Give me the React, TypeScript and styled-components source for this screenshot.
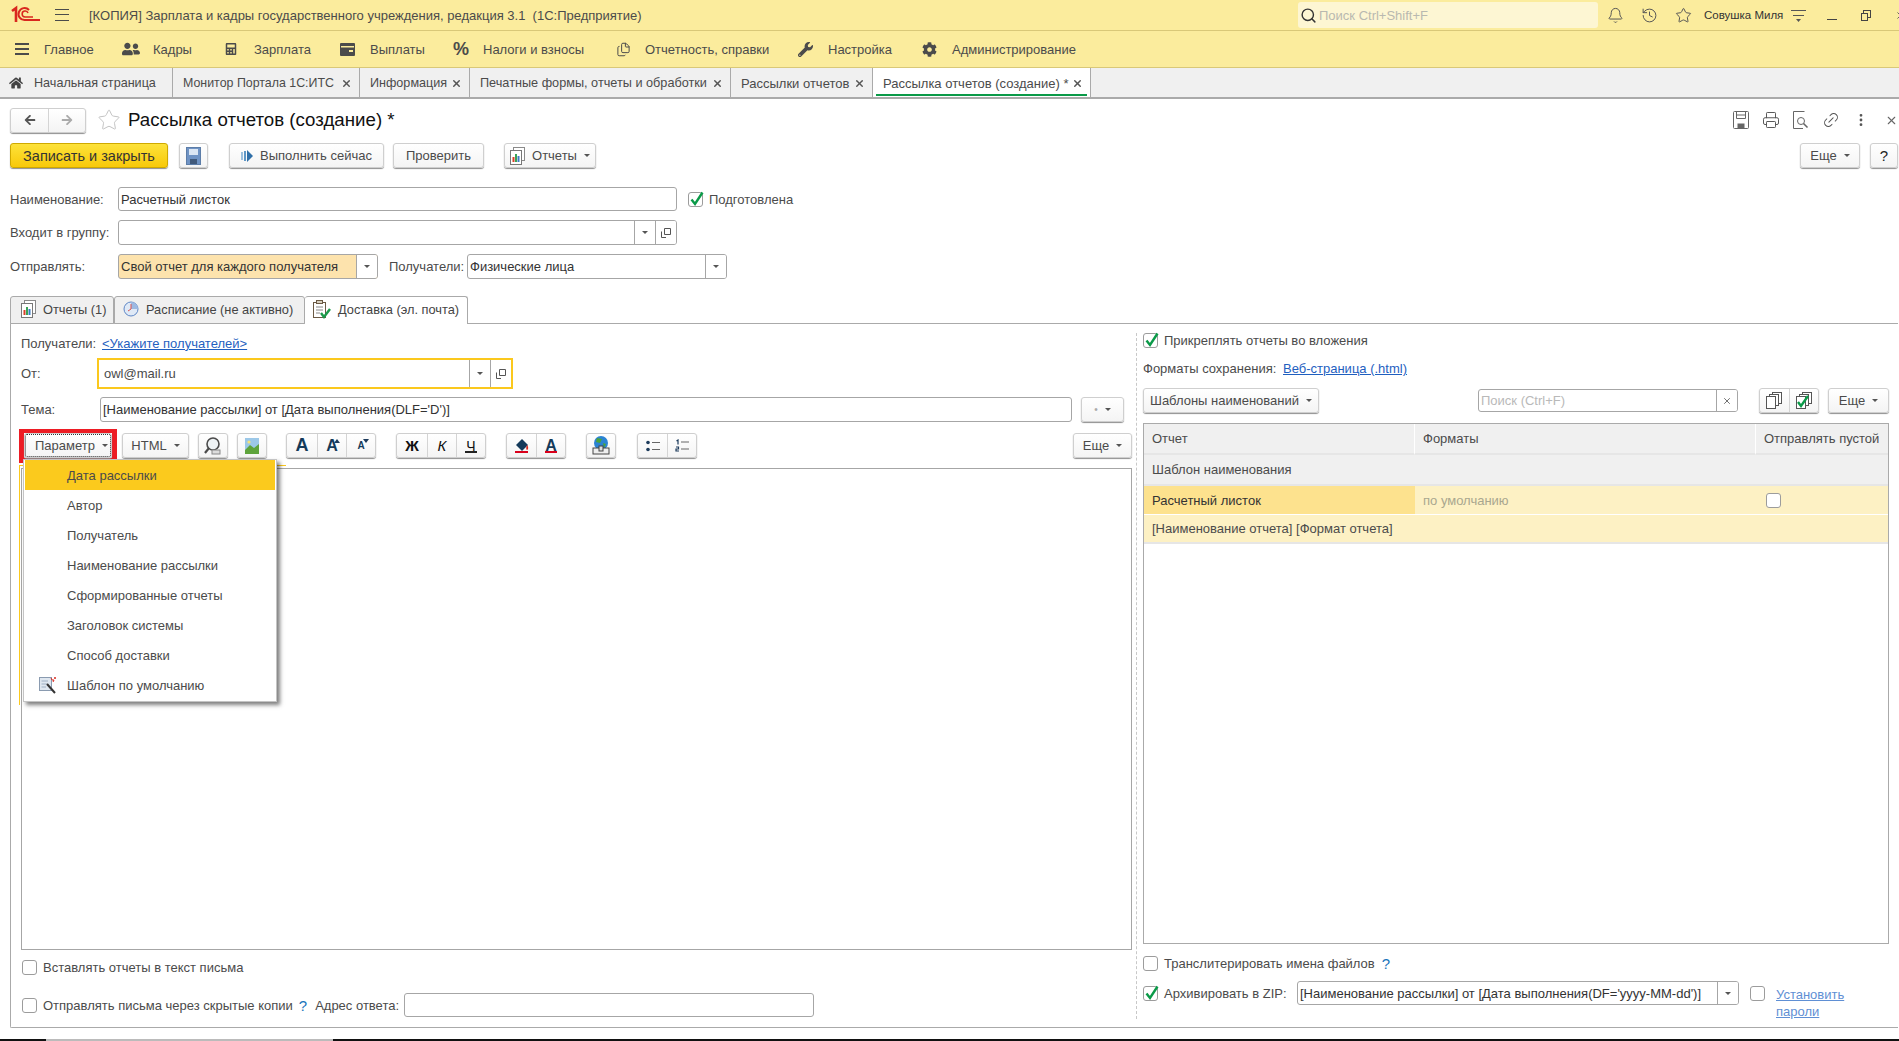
import * as React from 'react';
import styled, { createGlobalStyle } from 'styled-components';
import { Bell, History, Star, Search, X, Files, Link2, MoreVertical, Printer } from 'lucide-react';
import { FaHome, FaUserFriends, FaCalculator, FaWrench, FaCog, FaArrowLeft, FaArrowRight } from 'react-icons/fa';

const GlobalStyle = createGlobalStyle`
  html, body { margin: 0; padding: 0; background: #fff; }
  body { font-family: "Liberation Sans", Arial, sans-serif; font-size: 13px; color: #4b4b4b; }
  * { box-sizing: border-box; }
`;

const Page = styled.div`
  width: 1899px;
  height: 1041px;
  display: flex;
  flex-direction: column;
  overflow: hidden;
  background: #fff;
`;

/* top application chrome */
const TitleBar = styled.div`
  height: 31px;
  flex: none;
  display: flex;
  align-items: center;
  background: #fbec9d;
  border-bottom: 1px solid #d9c878;
  padding-left: 11px;
`;

const Hamburger = styled.div`
  width: 14px;
  height: 12px;
  margin-left: 14px;
  border-top: 1px solid #4b4b4b;
  border-bottom: 1px solid #4b4b4b;
  position: relative;
  &::after {
    content: '';
    position: absolute;
    left: 0;
    right: 0;
    top: 4px;
    height: 1px;
    background: #4b4b4b;
  }
`;

const AppTitle = styled.div`
  margin-left: 20px;
  white-space: pre;
  font-size: 13px;
`;

const GlobalSearch = styled.div`
  margin-left: auto;
  width: 300px;
  height: 26px;
  background: #fdf6d3;
  border-radius: 3px;
  display: flex;
  align-items: center;
  padding-left: 2px;
  color: #b9b9b0;
  gap: 2px;
  svg { color: #333; }
`;

const IconSlot = styled.div<{ $w?: number; $ml?: number }>`
  width: ${(p) => p.$w ?? 34}px;
  height: 24px;
  margin-left: ${(p) => p.$ml ?? 0}px;
  flex: none;
  display: flex;
  align-items: center;
  justify-content: center;
  color: #555;
`;

const EdgeClose = styled.div`
  width: 16px;
  flex: none;
  padding-left: 12px;
  color: #555;
  display: flex;
  svg { flex: none; }
`;

const UserName = styled.div`
  width: 74px;
  margin: 0 3px 0 4px;
  font-size: 11.5px;
  color: #333;
  white-space: nowrap;
`;

const MenuBar = styled.div`
  height: 37px;
  flex: none;
  display: flex;
  align-items: center;
  background: #fbec9d;
  border-bottom: 1px solid #d9c878;
  padding-left: 15px;
`;

const MenuItem = styled.div<{ $w: number; $gap: number }>`
  width: ${(p) => p.$w}px;
  flex: none;
  display: flex;
  align-items: center;
  gap: ${(p) => p.$gap}px;
  white-space: nowrap;
  svg { flex: none; color: #4b4b4b; }
`;

const Percent = styled.span`
  font-size: 18px;
  font-weight: bold;
  color: #4b4b4b;
  width: 15px;
`;

const TabStrip = styled.div`
  height: 31px;
  flex: none;
  display: flex;
  background: #f0f0f0;
  border-bottom: 2px solid #aaa;
`;

const TopTab = styled.div<{ $w: number; $active?: boolean; $pad?: number; $size?: number }>`
  width: ${(p) => p.$w}px;
  flex: none;
  display: flex;
  align-items: center;
  padding: 1px 7px 0 ${(p) => p.$pad ?? 10}px;
  border-right: 1px solid #aaa;
  white-space: nowrap;
  position: relative;
  font-size: ${(p) => p.$size ?? 13}px;
  background: ${(p) => (p.$active ? '#fff' : 'transparent')};
  border-left: ${(p) => (p.$active ? '1px solid #aaa' : 'none')};
  margin-left: ${(p) => (p.$active ? '-1px' : '0')};
  ${(p) =>
    p.$active &&
    `&::after {
      content: '';
      position: absolute;
      left: 3px;
      right: 3px;
      bottom: 1px;
      height: 2px;
      background: #0a9a48;
    }`}
`;

const TabLabel = styled.span<{ $ml?: number }>`
  flex: 1;
  margin-left: ${(p) => p.$ml ?? 0}px;
  overflow: hidden;
`;

const TabClose = styled.span`
  color: #555;
  display: flex;
  svg { display: block; }
`;

/* form area */
const Form = styled.div`
  flex: 1;
  min-height: 0;
  display: flex;
  flex-direction: column;
  padding: 9px 1px 0 10px;
`;

const FormHeader = styled.div`
  height: 24px;
  display: flex;
  align-items: center;
  flex: none;
`;

const FormTitle = styled.div`
  font-size: 18.7px;
  color: #111;
  margin-left: 7px;
  white-space: nowrap;
`;

const HeaderTools = styled.div`
  margin-left: auto;
  display: flex;
  align-items: center;
`;

const CloseSlot = styled.div`
  width: 22px;
  display: flex;
  justify-content: flex-end;
  color: #666;
`;

const CommandBar = styled.div`
  margin-top: 11px;
  height: 26px;
  display: flex;
  flex: none;
`;

const Button = styled.div<{ $w: number; $ml?: number; $h?: number }>`
  width: ${(p) => p.$w}px;
  height: ${(p) => p.$h ?? 25}px;
  margin-left: ${(p) => p.$ml ?? 0}px;
  flex: none;
  display: flex;
  align-items: center;
  justify-content: center;
  gap: 7px;
  border: 1px solid #cfcfcf;
  border-radius: 3px;
  background: linear-gradient(#ffffff, #f4f4f4);
  box-shadow: 0 1px 1px #8f8f8f;
  white-space: nowrap;
`;

const PrimaryButton = styled(Button)`
  background: linear-gradient(#fde23a, #f8c90a);
  border-color: #cfa900;
  color: #333;
  font-size: 14.5px;
`;

const HelpButton = styled(Button)`
  color: #222;
  font-size: 15px;
`;

const Caret = styled.span`
  width: 0;
  height: 0;
  flex: none;
  border-left: 3px solid transparent;
  border-right: 3px solid transparent;
  border-top: 3px solid #555;
`;

const PushRight = styled.div`
  margin-left: auto;
  display: flex;
  gap: 10px;
`;

const FieldRow = styled.div<{ $mt: number; $h?: number }>`
  margin-top: ${(p) => p.$mt}px;
  height: ${(p) => p.$h ?? 25}px;
  flex: none;
  display: flex;
  align-items: center;
`;

const Label = styled.div<{ $w?: number; $ml?: number }>`
  width: ${(p) => (p.$w ? `${p.$w}px` : 'auto')};
  margin-left: ${(p) => p.$ml ?? 0}px;
  flex: none;
  white-space: nowrap;
`;

const Field = styled.div<{ $w: number; $bg?: string; $h?: number }>`
  width: ${(p) => p.$w}px;
  height: ${(p) => p.$h ?? 25}px;
  flex: none;
  display: flex;
  align-items: stretch;
  border: 1px solid #a6a6a6;
  border-radius: 3px;
  background: ${(p) => p.$bg ?? '#fff'};
  overflow: hidden;
  color: #333;
`;

const FieldValue = styled.div<{ $pad?: number }>`
  flex: 1;
  display: flex;
  align-items: center;
  padding-left: ${(p) => p.$pad ?? 2}px;
  white-space: nowrap;
  overflow: hidden;
`;

const FieldCell = styled.div<{ $w?: number }>`
  width: ${(p) => p.$w ?? 21}px;
  flex: none;
  display: flex;
  align-items: center;
  justify-content: center;
  background: #fff;
  border-left: 1px solid #a6a6a6;
  color: #555;
`;

const Check = styled.div<{ $ml?: number }>`
  width: 15px;
  height: 15px;
  margin-left: ${(p) => p.$ml ?? 0}px;
  flex: none;
  position: relative;
  border: 1px solid #9c9c9c;
  border-radius: 3px;
  background: #fff;
  svg { position: absolute; left: 0; top: -3px; }
`;

const CheckLabel = styled.div<{ $ml?: number }>`
  margin-left: ${(p) => p.$ml ?? 6}px;
  white-space: nowrap;
`;

const InnerTabs = styled.div`
  margin-top: 17px;
  height: 28px;
  margin-bottom: -1px;
  display: flex;
  flex: none;
  position: relative;
  z-index: 1;
`;

const InnerTab = styled.div<{ $w: number; $active?: boolean; $pad: number }>`
  width: ${(p) => p.$w}px;
  display: flex;
  align-items: center;
  gap: 7px;
  padding-left: ${(p) => p.$pad}px;
  padding-bottom: 2px;
  font-size: 12.8px;
  border: 1px solid #aaa;
  border-left-width: ${(p) => (p.$active ? 0 : 1)}px;
  border-bottom: ${(p) => (p.$active ? 'none' : '1px solid #aaa')};
  border-radius: 3px 3px 0 0;
  background: ${(p) => (p.$active ? '#fff' : '#f0f0f0')};
  white-space: nowrap;
  color: #444;
`;

const Panel = styled.div`
  height: 705px;
  flex: none;
  display: flex;
  border: 1px solid #aaa;
  border-right: none;
  border-radius: 0 0 0 2px;
`;

const LeftColumn = styled.div`
  width: 1125px;
  flex: none;
  display: flex;
  flex-direction: column;
  padding: 9px 4px 10px 10px;
`;

const Link = styled.span`
  color: #1f5fbf;
  text-decoration: underline;
`;

const FocusFrame = styled.div`
  height: 31px;
  width: 416px;
  flex: none;
  border: 2px solid #fbc81d;
  display: flex;
`;

const EditorToolbar = styled.div`
  margin-top: 11px;
  height: 26px;
  flex: none;
  display: flex;
  padding-left: 3px;
`;

const ParamFrame = styled.div`
  margin: -4px 0 -5px -5px;
  border: solid #ed1c24;
  border-width: 4px 5px 5px;
  flex: none;
  height: 34px;
`;

const ParamButton = styled(Button)`
  outline: 1px dotted #333;
  outline-offset: -2px;
  padding-left: 7px;
  gap: 7px;
`;

const ToolGroup = styled.div<{ $ml: number }>`
  margin-left: ${(p) => p.$ml}px;
  height: 25px;
  flex: none;
  display: flex;
  border: 1px solid #cfcfcf;
  border-radius: 3px;
  background: linear-gradient(#ffffff, #f4f4f4);
  box-shadow: 0 1px 1px #8f8f8f;
`;

const ToolCell = styled.div<{
  $w?: number;
  $color?: string;
  $size?: number;
  $bold?: boolean;
  $italic?: boolean;
  $underline?: string;
}>`
  width: ${(p) => p.$w ?? 29}px;
  position: relative;
  display: flex;
  align-items: center;
  justify-content: center;
  color: ${(p) => p.$color ?? '#111'};
  font-size: ${(p) => p.$size ?? 15}px;
  font-weight: ${(p) => (p.$bold ? 'bold' : 'normal')};
  font-style: ${(p) => (p.$italic ? 'italic' : 'normal')};
  & + & { border-left: 1px solid #d4d4d4; }
  ${(p) =>
    p.$underline &&
    `&::after {
      content: '';
      position: absolute;
      left: 8px;
      right: 8px;
      bottom: 4px;
      height: 2px;
      background: ${p.$underline};
    }`}
`;

const SizeMark = styled.span<{ $down?: boolean }>`
  position: absolute;
  top: 5px;
  right: 6px;
  width: 0;
  height: 0;
  border-left: 3px solid transparent;
  border-right: 3px solid transparent;
  ${(p) => (p.$down ? 'border-top: 4px solid #1d3b5c;' : 'border-bottom: 4px solid #1d3b5c;')}
`;

const EditorPane = styled.div`
  margin-top: 9px;
  flex: 1;
  min-height: 0;
  border: 1px solid #a6a6a6;
  position: relative;
  background: #fff;
`;

const FocusRemnant = styled.div`
  position: absolute;
  left: -3px;
  top: -4px;
  width: 267px;
  height: 240px;
  border-left: 1px solid #fbc81d;
  border-top: 1px solid #fbc81d;
`;

const Dropdown = styled.div`
  position: absolute;
  left: 1px;
  top: -10px;
  width: 254px;
  padding: 0 1px 1px;
  background: #fff;
  border: 1px solid #c4c4c4;
  box-shadow: 3px 3px 4px rgba(0, 0, 0, 0.5);
  z-index: 3;
`;

const DropdownItem = styled.div<{ $active?: boolean }>`
  height: 30px;
  padding-left: 42px;
  display: flex;
  align-items: center;
  position: relative;
  background: ${(p) => (p.$active ? '#fbca1d' : 'transparent')};
  color: #4b4b4b;
  svg { position: absolute; left: 14px; top: 6px; }
`;

const CheckRow = styled.div<{ $mt: number; $h?: number }>`
  margin-top: ${(p) => p.$mt}px;
  height: ${(p) => p.$h ?? 15}px;
  flex: none;
  display: flex;
  align-items: center;
`;

const Hint = styled.span<{ $ml: number }>`
  color: #1a75bb;
  font-size: 15px;
  margin-left: ${(p) => p.$ml}px;
`;

const RightColumn = styled.div`
  flex: 1;
  margin: 9px 0 8px;
  padding: 0 9px 14px 6px;
  border-left: 1px dashed #c8c8c8;
  display: flex;
  flex-direction: column;
`;

const RightToolbar = styled.div`
  margin-top: 12px;
  height: 26px;
  flex: none;
  display: flex;
  align-items: flex-start;
`;

const SearchField = styled(Field)`
  margin-left: 159px;
  margin-top: 1px;
  height: 23px;
`;

const Placeholder = styled(FieldValue)`
  color: #b9b9b9;
`;

const ReportTable = styled.div`
  margin-top: 9px;
  flex: 1;
  min-height: 0;
  border: 1px solid #aaa;
  display: grid;
  grid-template-columns: 271px 341px 1fr;
  grid-auto-rows: min-content;
`;

const Cell = styled.div<{ $span?: number; $bg?: string; $h?: number; $header?: boolean }>`
  grid-column: span ${(p) => p.$span ?? 1};
  height: ${(p) => p.$h ?? 31}px;
  display: flex;
  align-items: center;
  padding-left: 8px;
  background: ${(p) => p.$bg ?? '#fff'};
  color: #4b4b4b;
  border-bottom: 2px solid #e6e6e6;
  border-right: ${(p) => (p.$header ? '1px solid #fff' : 'none')};
  white-space: nowrap;
`;

const SelectedCell = styled(Cell)<{ $muted?: boolean }>`
  color: ${(p) => (p.$muted ? '#a9a78f' : '#333')};
  border-bottom: 1px solid #fff;
`;

const CheckCell = styled(SelectedCell)`
  padding-left: 10px;
`;

const ZipLabel = styled.div`
  width: 133px;
  margin-left: 6px;
  flex: none;
  white-space: nowrap;
`;

const PasswordLink = styled.div`
  margin-left: 11px;
  margin-top: 19px;
  color: #5f8fd4;
  text-decoration: underline;
  line-height: 17px;
  width: 90px;
`;

const ZipRow = styled.div`
  margin-top: 10px;
  height: 24px;
  flex: none;
  display: flex;
  align-items: center;
`;

const ScreenEdge = styled.div`
  height: 2px;
  flex: none;
  margin: auto -1px 0 -10px;
  background: linear-gradient(90deg, #111 46px, #bbb 46px, #bbb 333px, #111 333px);
`;

const NavCell = styled(ToolCell)`
  width: 37px;
`;

const LinkIcon = styled(Link2)`
  transform: rotate(-45deg);
`;

const Dot = styled.span`
  color: #aaa;
  font-size: 10px;
`;

const Logo1C = () => (
  <svg width="30" height="22" viewBox="0 0 30 22" fill="none" stroke="#d9281e">
    <path d="M1 7 L5 4 V18" strokeWidth="2.6" />
    <path d="M18 6 A6 6 0 1 0 14 16 H29" strokeWidth="2" />
    <path d="M17 9 A3 3 0 1 0 14 13 H22" strokeWidth="1.6" />
  </svg>
);

const CheckMark = () => (
  <svg width="16" height="17" viewBox="0 0 16 17" fill="none">
    <path d="M2.5 9.5 L6 14 L13.5 2.5" stroke="#0a9a48" strokeWidth="2.4" />
  </svg>
);

const SmallClose = () => <X size={11} strokeWidth={3.2} />;

const OpenIcon = () => (
  <svg width="10" height="10" viewBox="0 0 10 10" fill="none" stroke="#555">
    <path d="M3.5 .5 H9.5 V6.5 H3.5 Z" />
    <path d="M.5 3.5 V9.5 H5" />
  </svg>
);

const SaveIcon = () => (
  <svg width="15" height="18" viewBox="0 0 15 18">
    <rect x=".5" y=".5" width="14" height="17" fill="#6f93c4" stroke="#5c7da8" />
    <rect x="3" y="2" width="9" height="6" fill="#dbe6f3" />
    <rect x="4" y="12" width="7" height="5" fill="#40597a" />
  </svg>
);

const OutlineSave = () => (
  <svg width="16" height="18" viewBox="0 0 16 18" fill="none" stroke="#666">
    <rect x=".5" y=".5" width="15" height="17" rx="1" />
    <path d="M3.5 .5 V7.5 H12.5 V.5 M3.5 4 H12.5" />
    <rect x="5" y="13" width="6" height="4.5" fill="#666" />
  </svg>
);

const PreviewIcon = () => (
  <svg width="16" height="18" viewBox="0 0 16 18" fill="none" stroke="#666">
    <path d="M10 17.5 H.5 V.5 H11.5" />
    <circle cx="8" cy="10" r="3.5" />
    <path d="M10.5 12.5 L14.5 16.5" strokeWidth="1.6" />
  </svg>
);

const RunIcon = () => (
  <svg width="12" height="12" viewBox="0 0 12 12" fill="#2f6fa8">
    <rect x="0" y="2" width="2" height="8" fill="#9cc0de" />
    <rect x="3" y="1" width="2" height="10" fill="#5f97c6" />
    <path d="M6 0 L12 6 L6 12 Z" />
  </svg>
);

const ReportIcon = () => (
  <svg width="15" height="18" viewBox="0 0 15 18">
    <rect x="3.5" y=".5" width="11" height="13" fill="#fff" stroke="#8a8a8a" />
    <rect x=".5" y="3.5" width="11" height="14" fill="#fff" stroke="#777" />
    <rect x="2.5" y="10" width="2" height="5" fill="#d9412b" />
    <rect x="5" y="7" width="2" height="8" fill="#3aa356" />
    <rect x="7.5" y="9" width="2" height="6" fill="#3f7cc4" />
  </svg>
);

const ClockPie = () => (
  <svg width="16" height="16" viewBox="0 0 16 16">
    <circle cx="8" cy="8" r="7" fill="#dfe9f6" stroke="#5f87c6" />
    <path d="M8 8 V1 A7 7 0 0 1 15 8 Z" fill="#9db9e2" />
    <path d="M8 3 V8 L5 10" fill="none" stroke="#d9534f" />
  </svg>
);

const DeliveryIcon = () => (
  <svg width="18" height="19" viewBox="0 0 18 19" fill="none">
    <rect x=".5" y="2.5" width="12" height="15" fill="#fff" stroke="#6b5a45" />
    <rect x="3.5" y=".5" width="6" height="3" fill="#d8d0c0" stroke="#6b5a45" />
    <path d="M3 7 H10 M3 10 H10 M3 13 H7" stroke="#888" />
    <path d="M8 13 L11 17 L17 9" stroke="#1a9a4a" strokeWidth="2.4" />
  </svg>
);

const WalletIcon = () => (
  <svg width="15" height="13" viewBox="0 0 15 13" fill="#4b4b4b">
    <rect x="0" y="0" width="15" height="13" rx="1" />
    <rect x="1" y="3" width="13" height="1.5" fill="#fbec9d" />
    <rect x="9" y="7" width="4" height="2" fill="#fbec9d" />
  </svg>
);

const MagnifierDoc = () => (
  <svg width="20" height="20" viewBox="0 0 20 20" fill="none" stroke="#4b4b4b">
    <circle cx="10" cy="8" r="6" fill="#eef2f4" strokeWidth="1.6" />
    <path d="M6 12 L2 17" strokeWidth="2.2" />
    <rect x="9" y="14" width="8" height="4" fill="#ddd" stroke="#888" />
  </svg>
);

const PictureIcon = () => (
  <svg width="14" height="16" viewBox="0 0 14 16">
    <rect width="14" height="16" fill="#9cc8e8" />
    <circle cx="4" cy="4" r="1.6" fill="#f4e27a" />
    <path d="M0 12 L5 7 L9 10 L14 6 V16 H0 Z" fill="#5ea33b" />
  </svg>
);

const FillIcon = () => (
  <svg width="14" height="14" viewBox="0 0 14 14">
    <path d="M7 0 L13 6 L7 12 L1 6 Z" fill="#143a5a" />
    <path d="M12 6 C14 8 13 11 12 11 C11 11 11 8 12 6" fill="#d9281e" />
  </svg>
);

const GlobeIcon = () => (
  <svg width="18" height="20" viewBox="0 0 18 20">
    <circle cx="9" cy="7" r="7" fill="#2b83d3" />
    <path d="M5 2 L10 3 L8 7 L4 6 Z M11 7 L14 8 L12 12 Z" fill="#4ba33b" />
    <rect x="1" y="12" width="16" height="6" fill="#eee" stroke="#444" />
    <rect x="7" y="10" width="4" height="5" fill="#ddd" stroke="#444" />
  </svg>
);

const BulletList = () => (
  <svg width="14" height="12" viewBox="0 0 14 12" fill="#1d3b5c">
    <circle cx="2" cy="2.5" r="1.8" />
    <circle cx="2" cy="9.5" r="1.8" />
    <rect x="6" y="2" width="8" height="1" fill="#666" />
    <rect x="6" y="9" width="8" height="1" fill="#666" />
  </svg>
);

const NumberList = () => (
  <svg width="14" height="13" viewBox="0 0 14 13" fill="none" stroke="#1d3b5c">
    <path d="M1.5 2 L3 1 V5.5" strokeWidth="1.2" />
    <path d="M1 8 H3.5 V10 H1 V12 H4" strokeWidth="1.2" />
    <path d="M6 3 H14 M6 10 H14" stroke="#666" />
  </svg>
);

const WandIcon = () => (
  <svg width="18" height="18" viewBox="0 0 18 18" fill="none">
    <rect x=".5" y="1.5" width="12" height="13" fill="#dfe7f0" stroke="#8a9bb0" />
    <path d="M2.5 5 H9 M2.5 8 H8 M2.5 11 H7" stroke="#9fb0c4" />
    <path d="M8 8 L16 17" stroke="#333" strokeWidth="2" />
    <path d="M12 2 L13 4 L15 4 L14 6" stroke="#d9281e" />
    <circle cx="16" cy="2" r="1" fill="#d9281e" />
  </svg>
);

const Sheets = ({ checked }: { checked?: boolean }) => (
  <svg width="17" height="17" viewBox="0 0 17 17" fill="none" stroke="#555">
    <rect x="6.5" y=".5" width="9" height="11" fill="#fff" />
    <rect x="3.5" y="2.5" width="9" height="11" fill="#fff" />
    <rect x=".5" y="4.5" width="9" height="12" fill="#fff" />
    {checked && <path d="M2 10 L5 14 L12 4" stroke="#0a9a48" strokeWidth="2.4" />}
  </svg>
);

interface TabInfo {
  title: string;
  width: number;
  size: number;
}

const topTabs: TabInfo[] = [
  { title: 'Монитор Портала 1С:ИТС', width: 187, size: 12.4 },
  { title: 'Информация', width: 110, size: 12.6 },
  { title: 'Печатные формы, отчеты и обработки', width: 261, size: 12.7 },
  { title: 'Рассылки отчетов', width: 142, size: 13 },
];

const paramItems = [
  'Дата рассылки',
  'Автор',
  'Получатель',
  'Наименование рассылки',
  'Сформированные отчеты',
  'Заголовок системы',
  'Способ доставки',
];

const App = (): React.ReactElement => {
  return (
    <Page>
      <GlobalStyle />
      <TitleBar>
        <Logo1C />
        <Hamburger />
        <AppTitle>[КОПИЯ] Зарплата и кадры государственного учреждения, редакция 3.1  (1С:Предприятие)</AppTitle>
        <GlobalSearch>
          <Search size={17} strokeWidth={2} />
          Поиск Ctrl+Shift+F
        </GlobalSearch>
        <IconSlot>
          <Bell size={17} strokeWidth={1.4} />
        </IconSlot>
        <IconSlot>
          <History size={17} strokeWidth={1.4} />
        </IconSlot>
        <IconSlot>
          <Star size={17} strokeWidth={1.4} />
        </IconSlot>
        <UserName>Совушка Миля</UserName>
        <IconSlot>
          <svg width="15" height="15" viewBox="0 0 15 15" fill="none" stroke="#555">
            <path d="M0 2.5 H15 M2 7.5 H13" />
            <path d="M5 11 H10 L7.5 14 Z" fill="#555" stroke="none" />
          </svg>
        </IconSlot>
        <IconSlot>
          <svg width="10" height="10" viewBox="0 0 10 10" stroke="#444">
            <path d="M0 9.5 H10" />
          </svg>
        </IconSlot>
        <IconSlot>
          <svg width="10" height="11" viewBox="0 0 10 11" fill="none" stroke="#444">
            <rect x="2.5" y=".5" width="7" height="7" />
            <rect x=".5" y="3.5" width="6" height="7" fill="#fbec9d" />
          </svg>
        </IconSlot>
        <EdgeClose>
          <X size={11} />
        </EdgeClose>
      </TitleBar>

      <MenuBar>
        <MenuItem $w={107} $gap={15}>
          <svg width="14" height="14" viewBox="0 0 14 14" fill="#4b4b4b">
            <rect y="1" width="14" height="2" />
            <rect y="6" width="14" height="2" />
            <rect y="11" width="14" height="2" />
          </svg>
          Главное
        </MenuItem>
        <MenuItem $w={103} $gap={13}>
          <FaUserFriends size={18} />
          Кадры
        </MenuItem>
        <MenuItem $w={115} $gap={17}>
          <FaCalculator size={12} />
          Зарплата
        </MenuItem>
        <MenuItem $w={113} $gap={15}>
          <WalletIcon />
          Выплаты
        </MenuItem>
        <MenuItem $w={163} $gap={15}>
          <Percent>%</Percent>
          Налоги и взносы
        </MenuItem>
        <MenuItem $w={182} $gap={14}>
          <Files size={15} strokeWidth={1.6} />
          Отчетность, справки
        </MenuItem>
        <MenuItem $w={124} $gap={15}>
          <FaWrench size={15} />
          Настройка
        </MenuItem>
        <MenuItem $w={220} $gap={15}>
          <FaCog size={15} />
          Администрирование
        </MenuItem>
      </MenuBar>

      <TabStrip>
        <TopTab $w={173} $pad={9} $size={12.6}>
          <FaHome size={14} color="#444" />
          <TabLabel $ml={11}>Начальная страница</TabLabel>
        </TopTab>
        {topTabs.map((tab) => (
          <TopTab key={tab.title} $w={tab.width} $size={tab.size}>
            <TabLabel>{tab.title}</TabLabel>
            <TabClose>
              <SmallClose />
            </TabClose>
          </TopTab>
        ))}
        <TopTab $w={219} $active>
          <TabLabel>Рассылка отчетов (создание) *</TabLabel>
          <TabClose>
            <SmallClose />
          </TabClose>
        </TopTab>
      </TabStrip>

      <Form>
        <FormHeader>
          <ToolGroup $ml={0}>
            <NavCell $color="#555">
              <FaArrowLeft size={12} />
            </NavCell>
            <NavCell $color="#aaa">
              <FaArrowRight size={12} />
            </NavCell>
          </ToolGroup>
          <IconSlot $w={24} $ml={11}>
            <Star size={24} strokeWidth={1} color="#c4c4c4" />
          </IconSlot>
          <FormTitle>Рассылка отчетов (создание) *</FormTitle>
          <HeaderTools>
            <IconSlot $w={30}>
              <OutlineSave />
            </IconSlot>
            <IconSlot $w={30}>
              <Printer size={18} strokeWidth={1.3} />
            </IconSlot>
            <IconSlot $w={30}>
              <PreviewIcon />
            </IconSlot>
            <IconSlot $w={30}>
              <LinkIcon size={18} strokeWidth={1.3} />
            </IconSlot>
            <IconSlot $w={30}>
              <MoreVertical size={16} strokeWidth={2.2} />
            </IconSlot>
            <CloseSlot>
              <X size={13} />
            </CloseSlot>
          </HeaderTools>
        </FormHeader>

        <CommandBar>
          <PrimaryButton $w={158}>Записать и закрыть</PrimaryButton>
          <Button $w={29} $ml={11}>
            <SaveIcon />
          </Button>
          <Button $w={155} $ml={21}>
            <RunIcon />
            Выполнить сейчас
          </Button>
          <Button $w={91} $ml={9}>
            Проверить
          </Button>
          <Button $w={92} $ml={20}>
            <ReportIcon />
            Отчеты
            <Caret />
          </Button>
          <PushRight>
            <Button $w={60}>
              Еще
              <Caret />
            </Button>
            <HelpButton $w={28}>?</HelpButton>
          </PushRight>
        </CommandBar>

        <FieldRow $mt={18} $h={24}>
          <Label $w={108}>Наименование:</Label>
          <Field $w={559} $h={24}>
            <FieldValue>Расчетный листок</FieldValue>
          </Field>
          <Check $ml={11}>
            <CheckMark />
          </Check>
          <CheckLabel>Подготовлена</CheckLabel>
        </FieldRow>

        <FieldRow $mt={9}>
          <Label $w={108}>Входит в группу:</Label>
          <Field $w={559}>
            <FieldValue />
            <FieldCell>
              <Caret />
            </FieldCell>
            <FieldCell>
              <OpenIcon />
            </FieldCell>
          </Field>
        </FieldRow>

        <FieldRow $mt={9}>
          <Label $w={108}>Отправлять:</Label>
          <Field $w={260} $bg="#fde3ad">
            <FieldValue>Свой отчет для каждого получателя</FieldValue>
            <FieldCell>
              <Caret />
            </FieldCell>
          </Field>
          <Label $ml={11} $w={78}>
            Получатели:
          </Label>
          <Field $w={260}>
            <FieldValue>Физические лица</FieldValue>
            <FieldCell>
              <Caret />
            </FieldCell>
          </Field>
        </FieldRow>

        <InnerTabs>
          <InnerTab $w={104} $pad={10}>
            <ReportIcon />
            Отчеты (1)
          </InnerTab>
          <InnerTab $w={191} $pad={8}>
            <ClockPie />
            Расписание (не активно)
          </InnerTab>
          <InnerTab $w={163} $active $pad={8}>
            <DeliveryIcon />
            Доставка (эл. почта)
          </InnerTab>
        </InnerTabs>

        <Panel>
          <LeftColumn>
            <FieldRow $mt={0} $h={20}>
              <Label $w={81}>Получатели:</Label>
              <Link>&lt;Укажите получателей&gt;</Link>
            </FieldRow>
            <FieldRow $mt={5} $h={31}>
              <Label $w={76}>От:</Label>
              <FocusFrame>
                <FieldValue $pad={5}>owl@mail.ru</FieldValue>
                <FieldCell>
                  <Caret />
                </FieldCell>
                <FieldCell>
                  <OpenIcon />
                </FieldCell>
              </FocusFrame>
            </FieldRow>
            <FieldRow $mt={8}>
              <Label $w={79}>Тема:</Label>
              <Field $w={972}>
                <FieldValue>[Наименование рассылки] от [Дата выполнения(DLF='D')]</FieldValue>
              </Field>
              <Button $w={43} $ml={9}>
                <Dot>•</Dot>
                <Caret />
              </Button>
            </FieldRow>

            <EditorToolbar>
              <ParamFrame>
                <ParamButton $w={88}>
                  Параметр
                  <Caret />
                </ParamButton>
              </ParamFrame>
              <Button $w={67} $ml={5}>
                HTML
                <Caret />
              </Button>
              <Button $w={30} $ml={9}>
                <MagnifierDoc />
              </Button>
              <Button $w={30} $ml={9}>
                <PictureIcon />
              </Button>
              <ToolGroup $ml={19}>
                <ToolCell $color="#143a5a" $size={18} $bold $w={30}>
                  A
                </ToolCell>
                <ToolCell $color="#143a5a" $size={16} $bold $w={29}>
                  A
                  <SizeMark />
                </ToolCell>
                <ToolCell $color="#143a5a" $size={10} $bold $w={29}>
                  A
                  <SizeMark $down />
                </ToolCell>
              </ToolGroup>
              <ToolGroup $ml={20}>
                <ToolCell $size={15} $bold $w={30}>
                  Ж
                </ToolCell>
                <ToolCell $size={15} $italic>
                  К
                </ToolCell>
                <ToolCell $size={14} $underline="#222">
                  Ч
                </ToolCell>
              </ToolGroup>
              <ToolGroup $ml={20}>
                <ToolCell $underline="#d9001b">
                  <FillIcon />
                </ToolCell>
                <ToolCell $color="#143a5a" $size={16} $bold $underline="#d9001b">
                  A
                </ToolCell>
              </ToolGroup>
              <Button $w={30} $ml={20}>
                <GlobeIcon />
              </Button>
              <ToolGroup $ml={21}>
                <ToolCell>
                  <BulletList />
                </ToolCell>
                <ToolCell>
                  <NumberList />
                </ToolCell>
              </ToolGroup>
              <PushRight>
                <Button $w={59}>
                  Еще
                  <Caret />
                </Button>
              </PushRight>
            </EditorToolbar>

            <EditorPane>
              <FocusRemnant />
              <Dropdown>
                {paramItems.map((item, i) => (
                  <DropdownItem key={item} $active={i === 0}>
                    {item}
                  </DropdownItem>
                ))}
                <DropdownItem>
                  <WandIcon />
                  Шаблон по умолчанию
                </DropdownItem>
              </Dropdown>
            </EditorPane>

            <CheckRow $mt={10}>
              <Check $ml={1} />
              <CheckLabel>Вставлять отчеты в текст письма</CheckLabel>
            </CheckRow>
            <FieldRow $mt={18} $h={24}>
              <Check $ml={1} />
              <CheckLabel>Отправлять письма через скрытые копии</CheckLabel>
              <Hint $ml={6}>?</Hint>
              <Label $ml={8} $w={89}>
                Адрес ответа:
              </Label>
              <Field $w={410} $h={24} />
            </FieldRow>
          </LeftColumn>

          <RightColumn>
            <CheckRow $mt={0} $h={15}>
              <Check>
                <CheckMark />
              </Check>
              <CheckLabel>Прикреплять отчеты во вложения</CheckLabel>
            </CheckRow>
            <FieldRow $mt={12} $h={16}>
              <Label $w={140}>Форматы сохранения:</Label>
              <Link>Веб-страница (.html)</Link>
            </FieldRow>
            <RightToolbar>
              <Button $w={176}>
                Шаблоны наименований
                <Caret />
              </Button>
              <SearchField $w={260}>
                <Placeholder>Поиск (Ctrl+F)</Placeholder>
                <FieldCell>
                  <X size={10} />
                </FieldCell>
              </SearchField>
              <ToolGroup $ml={21}>
                <ToolCell $color="#555">
                  <Sheets />
                </ToolCell>
                <ToolCell>
                  <Sheets checked />
                </ToolCell>
              </ToolGroup>
              <Button $w={61} $ml={9}>
                Еще
                <Caret />
              </Button>
            </RightToolbar>

            <ReportTable>
              <Cell $bg="#f0f0f0" $header>
                Отчет
              </Cell>
              <Cell $bg="#f0f0f0" $header>
                Форматы
              </Cell>
              <Cell $bg="#f0f0f0">Отправлять пустой</Cell>
              <Cell $span={3} $bg="#f0f0f0">
                Шаблон наименования
              </Cell>
              <SelectedCell $bg="#fde28e" $h={29}>
                Расчетный листок
              </SelectedCell>
              <SelectedCell $bg="#fdf1c4" $h={29} $muted>
                по умолчанию
              </SelectedCell>
              <CheckCell $bg="#fdf1c4" $h={29}>
                <Check />
              </CheckCell>
              <Cell $span={3} $bg="#fdf1c4" $h={29}>
                [Наименование отчета] [Формат отчета]
              </Cell>
            </ReportTable>

            <CheckRow $mt={12}>
              <Check />
              <CheckLabel>Транслитерировать имена файлов</CheckLabel>
              <Hint $ml={7}>?</Hint>
            </CheckRow>
            <ZipRow>
              <Check>
                <CheckMark />
              </Check>
              <ZipLabel>Архивировать в ZIP:</ZipLabel>
              <Field $w={442} $h={24}>
                <FieldValue>[Наименование рассылки] от [Дата выполнения(DF='yyyy-MM-dd')]</FieldValue>
                <FieldCell>
                  <Caret />
                </FieldCell>
              </Field>
              <Check $ml={11} />
              <PasswordLink>Установить пароли</PasswordLink>
            </ZipRow>
          </RightColumn>
        </Panel>
        <ScreenEdge />
      </Form>
    </Page>
  );
};

export default App;
